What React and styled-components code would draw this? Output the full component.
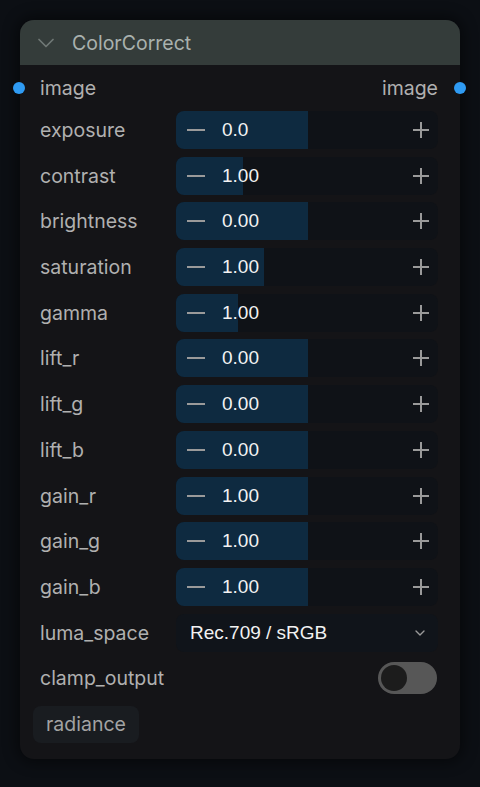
import React from 'react';
import styled, { createGlobalStyle } from 'styled-components';

const GlobalStyle = createGlobalStyle`
    html, body {
        margin: 0;
        padding: 0;
        background: #0c0f14;
    }
    * {
        box-sizing: border-box;
    }
`;

const Page = styled.div`
    width: 480px;
    height: 787px;
    padding: 20px;
    background: #0c0f14;
    font-family: Inter, "Noto Sans", sans-serif;
`;

const Node = styled.div`
    width: 440px;
    background: #141417;
    border-radius: 14px;
    box-shadow: 0 0 14px 4px rgba(0, 0, 0, 0.45);
    padding-bottom: 16px;
`;

const Header = styled.div`
    display: flex;
    align-items: center;
    gap: 12px;
    height: 45px;
    padding: 0 12px;
    background: #343c3a;
    border-radius: 14px 14px 0 0;
    color: #a9b1ae;
    font-size: 19.5px;
`;

const Body = styled.div`
    display: flex;
    flex-direction: column;
    padding: 0 22px 0 20px;
`;

const IORow = styled.div`
    position: relative;
    display: flex;
    justify-content: space-between;
    align-items: center;
    height: 46px;
    color: #b0b0b0;
    font-size: 19.5px;
`;

const Dot = styled.span`
    position: absolute;
    top: 17px;
    width: 12px;
    height: 12px;
    border-radius: 50%;
    background: #2f9bf3;
    ${props => props.side === 'left' ? 'left: -27px;' : 'right: -28px;'}
`;

const Widgets = styled.div`
    display: flex;
    flex-direction: column;
    gap: 7.7px;
`;

const Row = styled.div`
    display: grid;
    grid-template-columns: 136px 262px;
    align-items: center;
    height: 38px;
`;

const Label = styled.span`
    color: #b0b0b0;
    font-size: 19.5px;
`;

const Slider = styled.div`
    position: relative;
    display: flex;
    align-items: center;
    height: 38px;
    background: #0f1217;
    border-radius: 8px;
    overflow: hidden;
`;

const Fill = styled.div`
    position: absolute;
    left: 0;
    top: 0;
    bottom: 0;
    background: #0e2a40;
`;

const StepBtn = styled.span`
    position: relative;
    display: flex;
    align-items: center;
    justify-content: center;
    width: 40px;
    height: 38px;
    color: #9a9a9a;
    ${props => props.right && 'margin-left: auto; width: 34px;'}
`;

const Value = styled.span`
    position: relative;
    margin-left: 6px;
    color: #f2f2f2;
    font-family: "Liberation Sans", Arial, sans-serif;
    font-size: 19px;
`;

const Select = styled.div`
    display: flex;
    align-items: center;
    justify-content: space-between;
    height: 38px;
    padding: 0 10px 0 14px;
    background: #10141a;
    border-radius: 8px;
    color: #f2f2f2;
    font-family: "Liberation Sans", Arial, sans-serif;
    font-size: 19px;
`;

const Toggle = styled.div`
    justify-self: end;
    display: flex;
    align-items: center;
    width: 59px;
    height: 32px;
    padding: 3px;
    margin-right: 1px;
    border-radius: 16px;
    background: #575757;
`;

const Knob = styled.span`
    width: 26px;
    height: 26px;
    border-radius: 50%;
    background: #1c1c1c;
`;

const Chip = styled.span`
    align-self: flex-start;
    margin: 1px 0 0 -7px;
    padding: 6px 13px 7px;
    border-radius: 8px;
    background: #191c20;
    color: #a3a3a3;
    font-size: 19.5px;
`;

const Minus = () => (
    <svg width="20" height="20" viewBox="0 0 20 20">
        <path d="M1 10h18" stroke="currentColor" strokeWidth="2" />
    </svg>
);

const Plus = () => (
    <svg width="20" height="20" viewBox="0 0 20 20">
        <path d="M2 10h16M10 2v16" stroke="currentColor" strokeWidth="2" />
    </svg>
);

const Chevron = ({ size, color, weight = 2 }) => (
    <svg width={size} height={size} viewBox="0 0 24 24" fill="none" stroke={color} strokeWidth={weight} strokeLinecap="round" strokeLinejoin="round">
        <path d="M6 9l6 6 6-6" />
    </svg>
);

const sliders = [
    { name: 'exposure', value: '0.0', fill: 132 },
    { name: 'contrast', value: '1.00', fill: 67 },
    { name: 'brightness', value: '0.00', fill: 132 },
    { name: 'saturation', value: '1.00', fill: 88 },
    { name: 'gamma', value: '1.00', fill: 62 },
    { name: 'lift_r', value: '0.00', fill: 132 },
    { name: 'lift_g', value: '0.00', fill: 132 },
    { name: 'lift_b', value: '0.00', fill: 132 },
    { name: 'gain_r', value: '1.00', fill: 132 },
    { name: 'gain_g', value: '1.00', fill: 132 },
    { name: 'gain_b', value: '1.00', fill: 132 },
];

function App() {
    return (
        <Page>
            <GlobalStyle />
            <Node>
                <Header>
                    <Chevron size={28} color="#6f7875" weight={1.5} />
                    <span>ColorCorrect</span>
                </Header>
                <Body>
                    <IORow>
                        <Dot side="left" />
                        <span>image</span>
                        <span>image</span>
                        <Dot side="right" />
                    </IORow>
                    <Widgets>
                        {sliders.map(s => (
                            <Row key={s.name}>
                                <Label>{s.name}</Label>
                                <Slider>
                                    <Fill style={{ width: s.fill }} />
                                    <StepBtn><Minus /></StepBtn>
                                    <Value>{s.value}</Value>
                                    <StepBtn right><Plus /></StepBtn>
                                </Slider>
                            </Row>
                        ))}
                        <Row>
                            <Label>luma_space</Label>
                            <Select>
                                <span>Rec.709 / sRGB</span>
                                <Chevron size={16} color="#9a9a9a" />
                            </Select>
                        </Row>
                        <Row>
                            <Label>clamp_output</Label>
                            <Toggle><Knob /></Toggle>
                        </Row>
                        <Chip>radiance</Chip>
                    </Widgets>
                </Body>
            </Node>
        </Page>
    );
}

export default App;
